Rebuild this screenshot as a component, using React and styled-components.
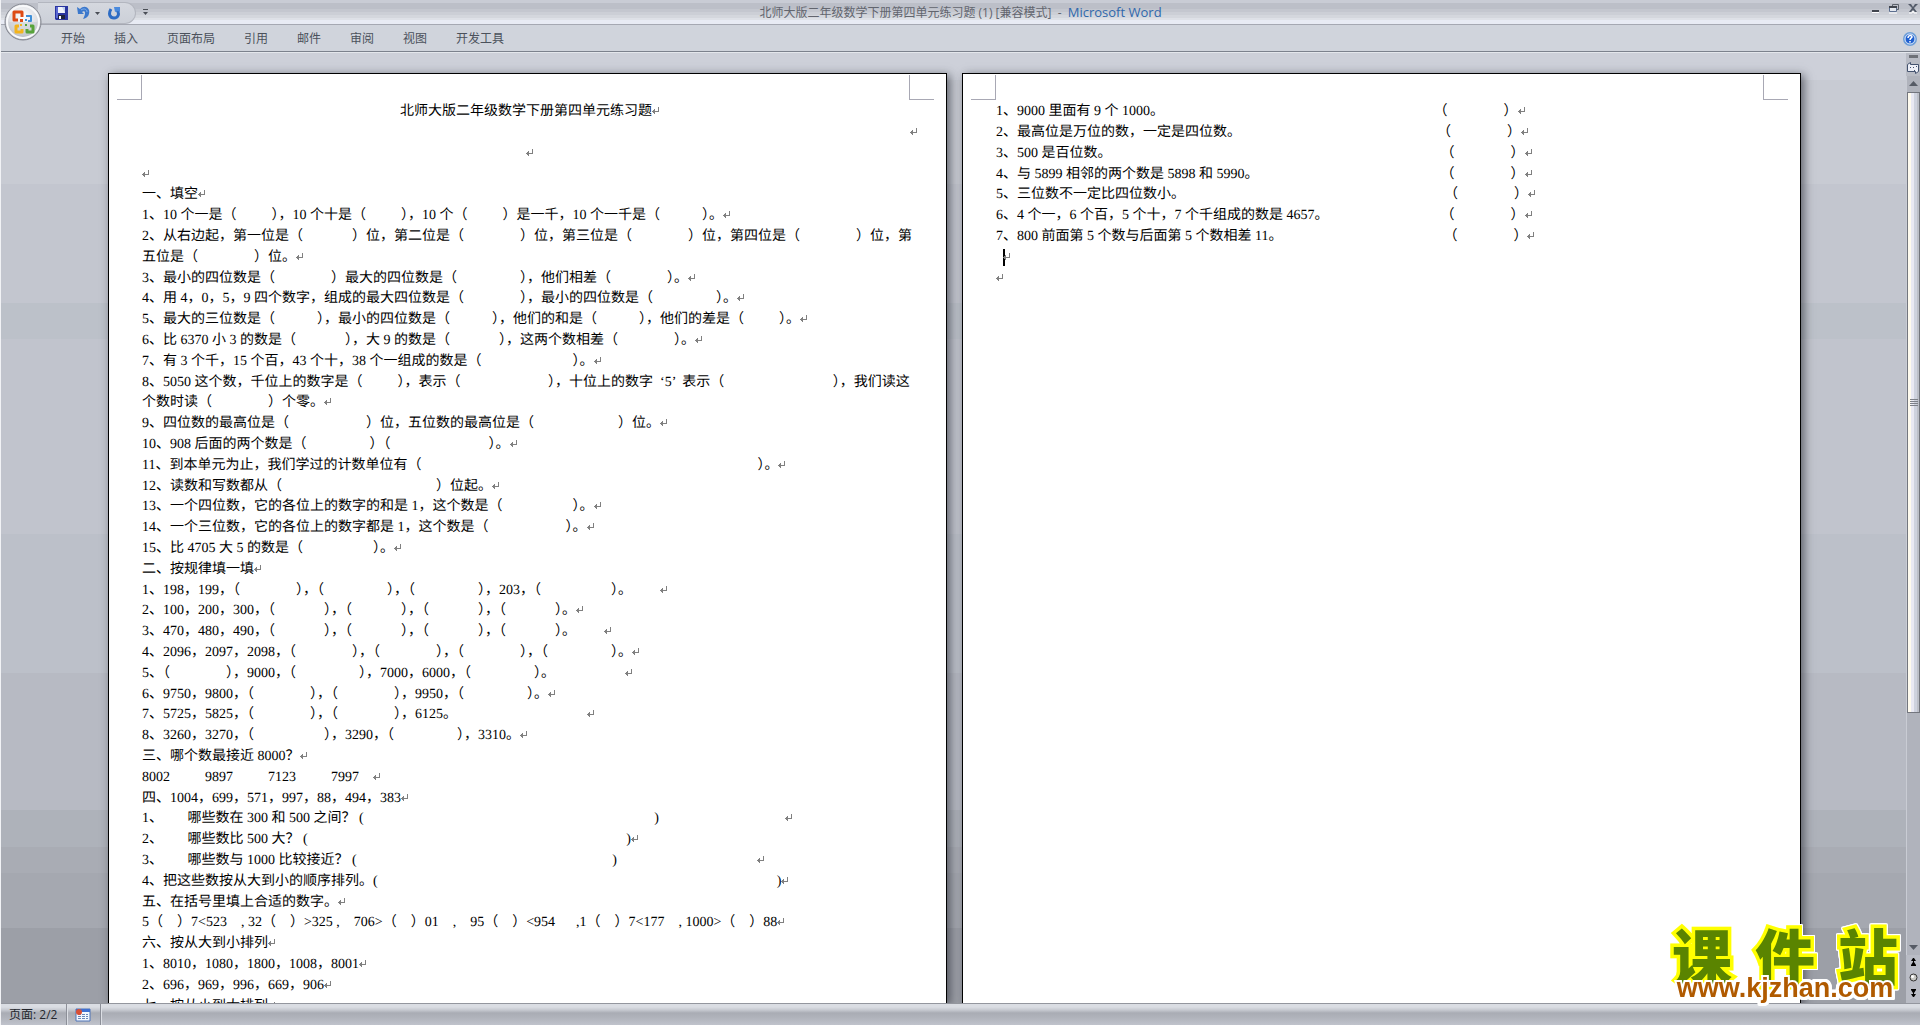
import React from 'react'
import styled, { createGlobalStyle } from 'styled-components'

const GlobalStyle = createGlobalStyle`
  * {
    box-sizing: border-box;
  }

  body {
    margin: 0;
    background: #c4c7d0;
  }

  button {
    border: 0;
    padding: 0;
    background: none;
    font: inherit;
    color: inherit;
    line-height: 0;
  }
`

const uiFont = `"Open Sans", "Noto Sans CJK SC", sans-serif`

const Window = styled.div`
  position: relative;
  display: flex;
  flex-direction: column;
  height: 100vh;
  overflow: hidden;
  border-left: 1px solid #f1f2f5;
  font-family: ${uiFont};
  font-size: 12px;
`

const TitleBar = styled.header`
  display: grid;
  grid-template-columns: 1fr auto 1fr;
  flex: none;
  height: 25px;
  border-bottom: 1px solid #a5a8b2;
  background: linear-gradient(
    #c9ccd5 0 3px,
    #bcbfc8 3px 9px,
    #c4c7cf 9px 12px,
    #cccfd6 12px 15px,
    #d4d7dd 15px 18px,
    #dee1e7 18px 20px,
    #e8ebf4 20px
  );
`

const QuickAccess = styled.div`
  display: flex;
  align-items: center;
  padding-left: 37px;
`

const QuickPill = styled.div`
  display: flex;
  align-items: center;
  height: 22px;
  padding: 0 14px 0 17px;
  border: 1px solid #b3b6bf;
  border-left: 0;
  border-radius: 0 12px 12px 0;
  background: linear-gradient(#d5d8df, #ccd0d8);
`

const IconButton = styled.button`
  display: block;
  margin-left: ${(p) => p.$gap || 0}px;
`

const Caption = styled.h1`
  margin: 0;
  align-self: center;
  font-size: 12px;
  line-height: 24px;
  font-weight: 400;
  white-space: pre;
  color: #62656e;

  span {
    font-size: 13px;
    color: #2f68ac;
  }
`

const WindowButtons = styled.div`
  display: flex;
  justify-content: flex-end;
  align-items: flex-start;
  gap: 9px;
  padding: 4px 2px 0 0;
`

const OfficeButton = styled.button`
  position: absolute;
  top: 3px;
  left: 3px;
  z-index: 2;
`

const Ribbon = styled.nav`
  display: flex;
  align-items: center;
  flex: none;
  gap: 29px;
  height: 28px;
  padding: 0 3px 0 60px;
  border-bottom: 1px solid #e4e7ec;
  box-shadow: inset 0 -1px #7c828d;
  background: #d0d4dc;
`

const Tab = styled.button`
  font-size: 12px;
  line-height: 24px;
  color: #4b515b;
`

const Help = styled.button`
  margin-left: auto;
`

const Body = styled.main`
  display: flex;
  flex: 1;
  min-height: 0;
`

const Workspace = styled.div`
  display: flex;
  flex: 1;
  justify-content: center;
  gap: 15px;
  min-width: 0;
  padding: 20px 0 0 2px;
  overflow: hidden;
  background: linear-gradient(
    #cdd0d9 0 27px,
    #c8cbd3 27px 131px,
    #c3c6cf 131px 250px,
    #bcc1c9 250px 286px,
    #c1c4cd 286px 481px,
    #bcc0c9 481px 620px,
    #b7bac3 620px 757px,
    #aeb2ba 757px 794px,
    #a9acb4 794px 820px,
    #a5a8b0 820px 875px,
    #9c9fa7 875px
  );
`

const Page = styled.article`
  flex: 0 1 839px;
  min-width: 0;
  padding: 1px 36px 0 33px;
  border: 1px solid #000;
  border-bottom: 0;
  background: #fff;
  box-shadow: 3px 2px 9px 0 rgba(40, 43, 52, 0.65);
  overflow: hidden;
`

const Corners = styled.div`
  display: flex;
  justify-content: space-between;
  margin: 0 -24px 1px -25px;

  &::before,
  &::after {
    content: '';
    width: 24px;
    height: 24px;
    border: 0 solid #a8a8b4;
    border-bottom-width: 1px;
  }

  &::before {
    border-right-width: 1px;
  }

  &::after {
    border-left-width: 1px;
  }
`

/* 15.6pt document grid: every fifth row loses a pixel */
const Line = styled.p`
  height: 21px;
  margin: 0;
  font-family: 'Liberation Serif', 'Noto Sans CJK SC', serif;
  font-size: 14px;
  line-height: 21px;
  text-align: ${(p) => p.$align || 'left'};
  text-rendering: geometricPrecision;
  white-space: pre;
  color: #000;

  &:nth-of-type(5n + 4) {
    height: 20px;
  }
`

const MarkSvg = styled.svg`
  width: 8px;
  height: 8px;
  margin-right: -8px;
`

const Caret = styled.span`
  display: inline-block;
  width: 2px;
  height: 17px;
  margin-right: -2px;
  vertical-align: middle;
  background: #000;
`

const ScrollColumn = styled.aside`
  display: flex;
  flex-direction: column;
  flex: none;
  width: 14px;
  background: #b9bcc5;
`

const SplitHandle = styled.div`
  height: 3px;
  margin: 2px 2px 2px 3px;
  background: #6e7178;
`

const ScrollTrack = styled.div`
  display: flex;
  flex: 1;
  flex-direction: column;
  border-left: 1px solid #c9ccd4;
  background: #b0b3bc;

  button {
    height: 16px;
  }
`

const Thumb = styled.div`
  display: flex;
  flex: 0 1 621px;
  flex-direction: column;
  justify-content: center;
  align-items: center;
  gap: 1px;
  border: 1px solid #73767e;
  background: linear-gradient(90deg, #fffbee 0 3px, #e9e9f3 3px 6px, #ced2de 6px 9px, #bcbfc8 9px);
`

const Grip = styled.i`
  width: 8px;
  height: 1px;
  background: #7d8088;
`

const Spring = styled.div`
  flex: 1;
`

const BrowseButtons = styled.div`
  display: flex;
  flex-direction: column;
  align-items: center;
  gap: 6px;
  height: 48px;
  padding-top: 3px;
`

const StatusBar = styled.footer`
  display: flex;
  flex: none;
  height: 22px;
  border-top: 1px solid #93969e;
  background: linear-gradient(#dadde3 0 3px, #c6c9d0 6px, #a9acb4 9px, #b1b4bc 14px, #c0c3cc);
  color: #23262d;
`

const StatusItem = styled.div`
  display: flex;
  align-items: center;
  padding: 0 9px 0 8px;
  line-height: 20px;
  white-space: pre;
  border-right: 1px solid #8c8f98;
  box-shadow: 1px 0 #dcdfe5;
`

const Watermark = styled.a`
  position: absolute;
  right: 22px;
  bottom: 24px;
  z-index: 3;
  width: 226px;
  text-decoration: none;
  filter: drop-shadow(1px 0 #fff) drop-shadow(-1px 0 #fff) drop-shadow(0 1px #fff) drop-shadow(0 -1px #fff);
`

const WatermarkName = styled.span`
  display: flex;
  justify-content: space-between;
  font-family: 'Noto Sans CJK SC', sans-serif;
  font-size: 60px;
  font-weight: 900;
  line-height: 44px;
  color: #5a8400;
  -webkit-text-stroke: 7px #ffff00;
  paint-order: stroke fill;
`

const WatermarkUrl = styled.span`
  display: block;
  font-family: 'Liberation Sans', sans-serif;
  font-size: 27px;
  font-weight: 700;
  line-height: 25px;
  text-align: center;
  color: #b05a00;
  -webkit-text-stroke: 4px #fff;
  paint-order: stroke fill;
`

const Mark = () => (
  <MarkSvg viewBox="0 0 8 8" shapeRendering="crispEdges" aria-hidden="true">
    <path d="M6 0h1v5H0V4h6z M1 3h2v3H1z M2 2h1v5H2z" fill="#808080" />
  </MarkSvg>
)

const SaveIcon = () => (
  <svg width="13" height="14" viewBox="0 0 13 14">
    <path d="M0 0h13v14H1l-1-1z" fill="#2a35a0" />
    <path d="M1 1h2v11H1z" fill="#5b68d2" />
    <path d="M3 1h7v6H3z" fill="#f0f3fb" />
    <path d="M7 1h3v6z" fill="#c2d2ee" />
    <path d="M3 9h7v4H3z" fill="#20243c" />
    <path d="M4 10h2v3H4z" fill="#fff" />
  </svg>
)

const UndoIcon = () => (
  <svg width="13" height="14" viewBox="0 0 13 14">
    <path d="M0 1l1 7h6L5 6c3-2 4 1 2 5l-1 2c5-1 7-5 6-9C10 0 6 0 3 3z" fill="#3c78cc" />
    <path d="M4 4c3-2 6-1 6 2" fill="none" stroke="#7fb0ee" />
  </svg>
)

const RedoIcon = () => (
  <svg width="13" height="14" viewBox="0 0 13 14">
    <path d="M3 3C0 8 2 12 6 12s6-4 3-8" fill="none" stroke="#2d6cc4" strokeWidth="3" />
    <path d="M6 1h6v5l-2-1-3 1z" fill="#4a8add" />
  </svg>
)

const DownIcon = ({ bar }) => (
  <svg width="7" height="7" viewBox="0 0 7 7">
    {bar && <path d="M1 0h5v1H1z" fill="#4a4e56" />}
    <path d="M1 3h5L3.500 6z" fill="#4a4e56" />
  </svg>
)

const OfficeLogo = () => (
  <svg width="39" height="39" viewBox="0 0 39 39">
    <defs>
      <radialGradient id="orb" cx="50%" cy="35%" r="65%">
        <stop offset="0" stopColor="#fff" />
        <stop offset="0.6" stopColor="#dddfe4" />
        <stop offset="1" stopColor="#a9acb4" />
      </radialGradient>
    </defs>
    <circle cx="19" cy="19" r="18" fill="url(#orb)" stroke="#858891" />
    <circle cx="19" cy="19" r="16" fill="none" stroke="#f8f9fb" strokeWidth="2" />
    <path d="M5 19a14 14 0 0 0 28 0z" fill="#c6c9d0" opacity="0.5" />
    <g fill="none" strokeWidth="3" strokeLinejoin="round">
      <path d="M14 17H10V9h8v5" stroke="#dd4a14" />
      <path d="M22 13h5v5h-3" stroke="#3f8fd8" strokeWidth="2" />
      <path d="M18 26v3h-6v-6h3" stroke="#f3b41c" />
      <path d="M23 26v3h6v-6h-3" stroke="#57a33a" />
    </g>
    <path d="M16 16h3v3h-3z" fill="#dd4a14" />
    <path d="M21 16h2v2h-2z" fill="#3f8fd8" />
    <path d="M16 21h2v2h-2z" fill="#f3b41c" />
    <path d="M21 21h2v2h-2z" fill="#57a33a" />
  </svg>
)

const MinimizeIcon = () => (
  <svg width="9" height="10" viewBox="0 0 9 10">
    <path d="M1 6h7v2H1z" fill="#41454e" />
    <path d="M1 8h7v1H1z" fill="#fff" />
  </svg>
)

const RestoreIcon = () => (
  <svg width="10" height="10" viewBox="0 0 10 10" fill="none">
    <path d="M3.500 2V.5h6v5H8" stroke="#5c616b" />
    <path d="M.5 3.500h7v4h-7z" fill="#e4e8ef" stroke="#5c6f90" />
    <path d="M0 3h8" stroke="#41454e" strokeWidth="2" />
    <path d="M0 9h8" stroke="#fff" />
  </svg>
)

const CloseIcon = () => (
  <svg width="10" height="10" viewBox="0 0 10 10">
    <path d="M1 9h3l1-2 1 2h3" fill="none" stroke="#fff" />
    <path d="M0 0h3l2 3 2-3h3L6 4l3 4H7L5 6 3 8H1l3-4z" fill="#535b69" />
  </svg>
)

const HelpIcon = () => (
  <svg width="14" height="14" viewBox="0 0 14 14">
    <circle cx="7" cy="7" r="6" fill="#1f5fd0" stroke="#6f9fd8" strokeWidth="2" />
    <circle cx="7" cy="7" r="5" fill="none" stroke="#dfeafa" strokeWidth="1" />
    <path d="M5 6c0-3 4-3 4-1 0 1-2 1-2 3M7 9v1.500" fill="none" stroke="#fff" strokeWidth="1.500" />
  </svg>
)

const RulerIcon = () => (
  <svg width="14" height="16" viewBox="0 0 14 16">
    <path d="M1.500 4.500l3-2v2h8v7l-3 2v-2h-8z" fill="#eef0f8" stroke="#44536f" />
    <path d="M4 7h1v1H4zM7 7h1v1H7zM10 6h1v1h-1zM8 10h1v1H8z" fill="#44536f" />
  </svg>
)

const Triangle = ({ down }) => (
  <svg width="13" height="16" viewBox="0 0 13 16">
    <path d={down ? 'M2 6h9L6.500 11z' : 'M2 10h9L6.500 5z'} fill="#565b65" />
  </svg>
)

const DoubleArrow = ({ down }) => (
  <svg width="7" height="9" viewBox="0 0 7 9">
    <g transform={down ? 'rotate(180 3.500 4.500)' : undefined}>
      <path d="M3 0h1l2 3H4v1l2 3H1l2-3V3H1zM1 7h5v1H1z" fill="#000" />
    </g>
  </svg>
)

const BrowseObject = () => (
  <svg width="9" height="9" viewBox="0 0 9 9">
    <circle cx="4.500" cy="4.500" r="3.500" fill="#c9c9c4" stroke="#333" />
    <circle cx="3.500" cy="3.500" r="1.500" fill="#fff" />
  </svg>
)

const MacroIcon = () => (
  <svg width="16" height="14" viewBox="0 0 16 14">
    <path d="M1 1h14v12H1z" fill="#f4f7fd" stroke="#4f74b8" />
    <path d="M1 1h14v3H1z" fill="#3f6fd0" />
    <path d="M3 6h3v1H3zM7 6h3v1H7zM11 6h2v1h-2zM3 8h3v1H3zM7 8h3v1H7zM11 8h2v1h-2zM3 10h3v1H3zM7 10h3v1H7zM11 10h2v1h-2z" fill="#6c87b8" />
    <circle cx="4" cy="4" r="3" fill="#d94f35" />
  </svg>
)

const tabs = ['开始', '插入', '页面布局', '引用', '邮件', '审阅', '视图', '开发工具']

// blank of n half-width spaces
const b = (n) => ' '.repeat(n)

// bracketed blank to write an answer in
const q = (n) => `（${b(n)}）`

const firstPage = [
  { text: '北师大版二年级数学下册第四单元练习题', align: 'center' },
  { text: '', align: 'right' },
  { text: '', align: 'center' },
  '',
  '一、填空',
  `1、10 个一是${q(10)}，10 个十是${q(10)}，10 个${q(10)}是一千，10 个一千是${q(12)}。`,
  { text: `2、从右边起，第一位是${q(14)}位，第二位是${q(16)}位，第三位是${q(16)}位，第四位是${q(16)}位，第`, wrap: true },
  `五位是${q(16)}位。`,
  `3、最小的四位数是${q(16)}最大的四位数是${q(18)}，他们相差${q(16)}。`,
  `4、用 4，0，5，9 四个数字，组成的最大四位数是${q(16)}，最小的四位数是${q(18)}。`,
  `5、最大的三位数是${q(12)}，最小的四位数是${q(12)}，他们的和是${q(12)}，他们的差是${q(10)}。`,
  `6、比 6370 小 3 的数是${q(14)}，大 9 的数是${q(14)}，这两个数相差${q(16)}。`,
  `7、有 3 个千，15 个百，43 个十，38 个一组成的数是${q(26)}。`,
  { text: `8、5050 这个数，千位上的数字是${q(10)}，表示${q(25)}，十位上的数字${b(2)}‘5’${b(2)}表示${q(31)}，我们读这`, wrap: true },
  `个数时读${q(16)}个零。`,
  `9、四位数的最高位是${q(22)}位，五位数的最高位是${q(24)}位。`,
  `10、908 后面的两个数是${q(18)}${q(28)}。`,
  `11、到本单元为止，我们学过的计数单位有${q(96)}。`,
  `12、读数和写数都从${q(44)}位起。`,
  `13、一个四位数，它的各位上的数字的和是 1，这个数是${q(20)}。`,
  `14、一个三位数，它的各位上的数字都是 1，这个数是${q(22)}。`,
  `15、比 4705 大 5 的数是${q(20)}。`,
  '二、按规律填一填',
  `1、198，199，${q(16)}，${q(18)}，${q(18)}，203，${q(20)}。${b(8)}`,
  `2、100，200，300，${q(14)}，${q(14)}，${q(14)}，${q(14)}。`,
  `3、470，480，490，${q(14)}，${q(14)}，${q(14)}，${q(14)}。${b(8)}`,
  `4、2096，2097，2098，${q(16)}，${q(16)}，${q(16)}，${q(18)}。`,
  `5、${q(16)}，9000，${q(18)}，7000，6000，${q(18)}。${b(20)}`,
  `6、9750，9800，${q(16)}，${q(16)}，9950，${q(18)}。`,
  `7、5725，5825，${q(16)}，${q(16)}，6125。${b(37)}`,
  `8、3260，3270，${q(20)}，3290，${q(18)}，3310。`,
  '三、哪个数最接近 8000？',
  `8002${b(10)}9897${b(10)}7123${b(10)}7997${b(4)}`,
  '四、1004，699，571，997，88，494，383',
  `1、${b(7)}哪些数在 300 和 500 之间？ (${b(83)})${b(36)}`,
  `2、${b(7)}哪些数比 500 大？ (${b(91)})`,
  `3、${b(7)}哪些数与 1000 比较接近？ (${b(73)})${b(40)}`,
  `4、把这些数按从大到小的顺序排列。(${b(114)})`,
  '五、在括号里填上合适的数字。',
  `5${q(4)}7<523${b(4)}, 32${q(4)}>325 ,${b(4)}706>${q(4)}01${b(4)},${b(4)}95${q(4)}<954${b(6)},1${q(4)}7<177${b(4)}, 1000>${q(4)}88`,
  '六、按从大到小排列',
  '1、8010，1080，1800，1008，8001',
  '2、696，969，996，669，906',
  '七、按从小到大排列',
]

const secondPage = [
  `1、9000 里面有 9 个 1000。${b(77)}${q(16)}`,
  `2、最高位是万位的数，一定是四位数。${b(56)}${q(16)}`,
  `3、500 是百位数。${b(94)}${q(16)}`,
  `4、与 5899 相邻的两个数是 5898 和 5990。${b(52)}${q(16)}`,
  `5、三位数不一定比四位数小。${b(74)}${q(16)}`,
  `6、4 个一，6 个百，5 个十，7 个千组成的数是 4657。${b(32)}${q(16)}`,
  `7、800 前面第 5 个数与后面第 5 个数相差 11。${b(46)}${q(16)}`,
  { text: b(2), caret: true },
  '',
]

const Sheet = ({ lines }) => (
  <Page>
    <Corners />
    {lines.map((line, index) => {
      const item = typeof line === 'string' ? { text: line } : line
      return (
        <Line key={index} $align={item.align}>
          {item.text}
          {item.caret && <Caret />}
          {!item.wrap && <Mark />}
        </Line>
      )
    })}
  </Page>
)

const App = () => {
  return (
    <Window>
      <GlobalStyle />
      <OfficeButton aria-label="Office">
        <OfficeLogo />
      </OfficeButton>
      <TitleBar>
        <QuickAccess>
          <QuickPill>
            <IconButton aria-label="保存"><SaveIcon /></IconButton>
            <IconButton $gap={9} aria-label="撤消"><UndoIcon /></IconButton>
            <IconButton $gap={4} aria-label="撤消列表"><DownIcon /></IconButton>
            <IconButton $gap={7} aria-label="重复"><RedoIcon /></IconButton>
          </QuickPill>
          <IconButton $gap={6} aria-label="自定义快速访问工具栏"><DownIcon bar /></IconButton>
        </QuickAccess>
        <Caption>
          北师大版二年级数学下册第四单元练习题 (1) [兼容模式]  -  <span>Microsoft Word</span>
        </Caption>
        <WindowButtons>
          <IconButton aria-label="最小化"><MinimizeIcon /></IconButton>
          <IconButton aria-label="还原"><RestoreIcon /></IconButton>
          <IconButton aria-label="关闭"><CloseIcon /></IconButton>
        </WindowButtons>
      </TitleBar>
      <Ribbon>
        {tabs.map((tab) => (
          <Tab key={tab}>{tab}</Tab>
        ))}
        <Help aria-label="帮助"><HelpIcon /></Help>
      </Ribbon>
      <Body>
        <Workspace>
          <Sheet lines={firstPage} />
          <Sheet lines={secondPage} />
        </Workspace>
        <ScrollColumn>
          <SplitHandle />
          <IconButton aria-label="标尺"><RulerIcon /></IconButton>
          <ScrollTrack>
            <button aria-label="向上"><Triangle /></button>
            <Thumb>
              <Grip /><Grip /><Grip /><Grip />
            </Thumb>
            <Spring />
            <button aria-label="向下"><Triangle down /></button>
          </ScrollTrack>
          <BrowseButtons>
            <IconButton aria-label="前一页"><DoubleArrow /></IconButton>
            <IconButton aria-label="选择浏览对象"><BrowseObject /></IconButton>
            <IconButton aria-label="下一页"><DoubleArrow down /></IconButton>
          </BrowseButtons>
        </ScrollColumn>
      </Body>
      <StatusBar>
        <StatusItem>页面: 2/2</StatusItem>
        <StatusItem><MacroIcon /></StatusItem>
      </StatusBar>
      <Watermark href="#">
        <WatermarkName>
          <span>课</span>
          <span>件</span>
          <span>站</span>
        </WatermarkName>
        <WatermarkUrl>www.kjzhan.com</WatermarkUrl>
      </Watermark>
    </Window>
  )
}

export default App
